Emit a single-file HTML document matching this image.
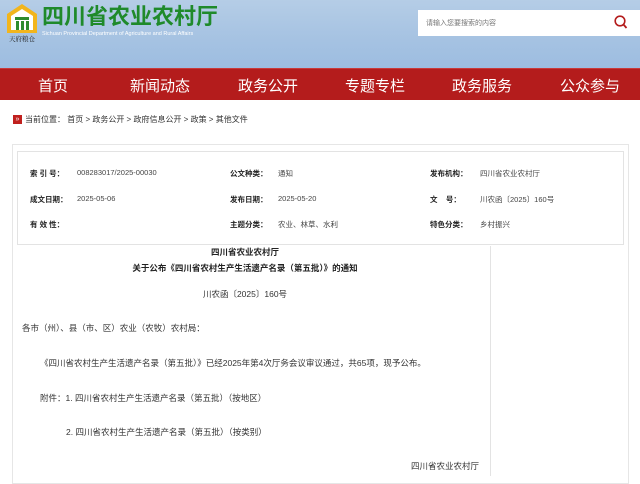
<!DOCTYPE html>
<html><head><meta charset="utf-8"><style>
*{margin:0;padding:0;box-sizing:border-box}
body{width:640px;height:476px;overflow:hidden;background:#fff;font-family:"Liberation Sans","Noto Sans CJK SC",sans-serif;position:relative;color:#333}
.hdr{position:absolute;left:0;top:0;width:640px;height:68px;background:linear-gradient(180deg,#b5cde6 0%,#a5c2e2 60%,#9dbde0 100%)}
.a{position:absolute;white-space:nowrap}
.nav{position:absolute;left:0;top:68px;width:640px;height:32px;background:#b41c1c;border-top:1px solid #c83a3a}
.nav span{position:absolute;top:6px;color:#fff;font-size:15px}
.lbl{font-weight:bold;font-size:7.5px;color:#222}
.val{font-size:7.5px;color:#444}
.t{font-size:8.5px;color:#333}
</style></head><body>
<div class="hdr"></div>
<svg class="a" style="left:5px;top:3px" width="34" height="40" viewBox="0 0 34 40">
<path d="M17 1 L32 11 L32 30 L2 30 L2 11 Z" fill="#f2b51c"/>
<path d="M17 6 L28 13 L28 27 L6 27 L6 13 Z" fill="#fff"/>
<rect x="10" y="14" width="14" height="3" fill="#2e8b2e"/>
<rect x="11" y="18" width="3" height="9" fill="#2e8b2e"/><rect x="16" y="18" width="3" height="9" fill="#2e8b2e"/><rect x="21" y="18" width="3" height="9" fill="#2e8b2e"/>
<text x="17" y="38" font-size="6.5" text-anchor="middle" fill="#222" font-family="Noto Serif CJK SC,serif">天府粮仓</text>
</svg>
<div class="a" style="left:42px;top:4px;font-size:22px;font-weight:bold;color:#1f8a2a;line-height:26px">四川省农业农村厅</div>
<div class="a" style="left:42px;top:31px;font-size:5.5px;color:#fff">Sichuan Provincial Department of Agriculture and Rural Affairs</div>
<div class="a" style="left:418px;top:10px;width:222px;height:26px;background:#fff"></div>
<div class="a" style="left:426px;top:18px;font-size:7px;color:#777">请输入您要搜索的内容</div>
<svg class="a" style="left:614px;top:15px" width="14" height="15" viewBox="0 0 14 15"><circle cx="6" cy="6" r="4.8" fill="none" stroke="#b41c1c" stroke-width="1.6"/><path d="M9.5 9.5 L12.5 13" stroke="#b41c1c" stroke-width="1.8"/></svg>
<div class="nav">
<span style="left:38px">首页</span><span style="left:130px">新闻动态</span><span style="left:238px">政务公开</span><span style="left:345px">专题专栏</span><span style="left:452px">政务服务</span><span style="left:560px">公众参与</span>
</div>
<div class="a" style="left:13px;top:115px;width:9px;height:9px;background:#c0201e;color:#fff;font-size:7px;line-height:9px;text-align:center">»</div>
<div class="a" style="left:25px;top:114px;font-size:8px;color:#333">当前位置：&nbsp;首页 &gt; 政务公开 &gt; 政府信息公开 &gt; 政策 &gt; 其他文件</div>
<div class="a" style="left:12px;top:144px;width:617px;height:340px;border:1px solid #e6e6e6"></div>
<div class="a" style="left:17px;top:151px;width:607px;height:94px;border:1px solid #e3e3e3"></div>
<div class="a" style="left:490px;top:246px;width:1px;height:230px;background:#e3e3e3"></div>
<div class="a lbl" style="left:30px;top:168px">索 引 号：</div><div class="a val" style="left:77px;top:168px">008283017/2025-00030</div>
<div class="a lbl" style="left:230px;top:168px">公文种类：</div><div class="a val" style="left:278px;top:168px">通知</div>
<div class="a lbl" style="left:430px;top:168px">发布机构：</div><div class="a val" style="left:480px;top:168px">四川省农业农村厅</div>
<div class="a lbl" style="left:30px;top:194px">成文日期：</div><div class="a val" style="left:77px;top:194px">2025-05-06</div>
<div class="a lbl" style="left:230px;top:194px">发布日期：</div><div class="a val" style="left:278px;top:194px">2025-05-20</div>
<div class="a lbl" style="left:430px;top:194px">文&nbsp;&nbsp;&nbsp;&nbsp;号：</div><div class="a val" style="left:480px;top:194px">川农函〔2025〕160号</div>
<div class="a lbl" style="left:30px;top:219px">有 效 性：</div>
<div class="a lbl" style="left:230px;top:219px">主题分类：</div><div class="a val" style="left:278px;top:219px">农业、林草、水利</div>
<div class="a lbl" style="left:430px;top:219px">特色分类：</div><div class="a val" style="left:480px;top:219px">乡村振兴</div>
<div class="a" style="left:0;width:490px;top:246px;text-align:center;font-size:8.5px;font-weight:bold;color:#222">四川省农业农村厅</div>
<div class="a" style="left:0;width:490px;top:262px;text-align:center;font-size:8.5px;font-weight:bold;color:#222">关于公布《四川省农村生产生活遗产名录（第五批）》的通知</div>
<div class="a t" style="left:0;width:490px;top:288px;text-align:center">川农函〔2025〕160号</div>
<div class="a t" style="left:22px;top:322px">各市（州）、县（市、区）农业（农牧）农村局：</div>
<div class="a t" style="left:40px;top:357px">《四川省农村生产生活遗产名录（第五批）》已经2025年第4次厅务会议审议通过，共65项，现予公布。</div>
<div class="a t" style="left:40px;top:392px">附件：1. 四川省农村生产生活遗产名录（第五批）（按地区）</div>
<div class="a t" style="left:66px;top:426px">2. 四川省农村生产生活遗产名录（第五批）（按类别）</div>
<div class="a t" style="left:411px;top:460px">四川省农业农村厅</div>
</body></html>
